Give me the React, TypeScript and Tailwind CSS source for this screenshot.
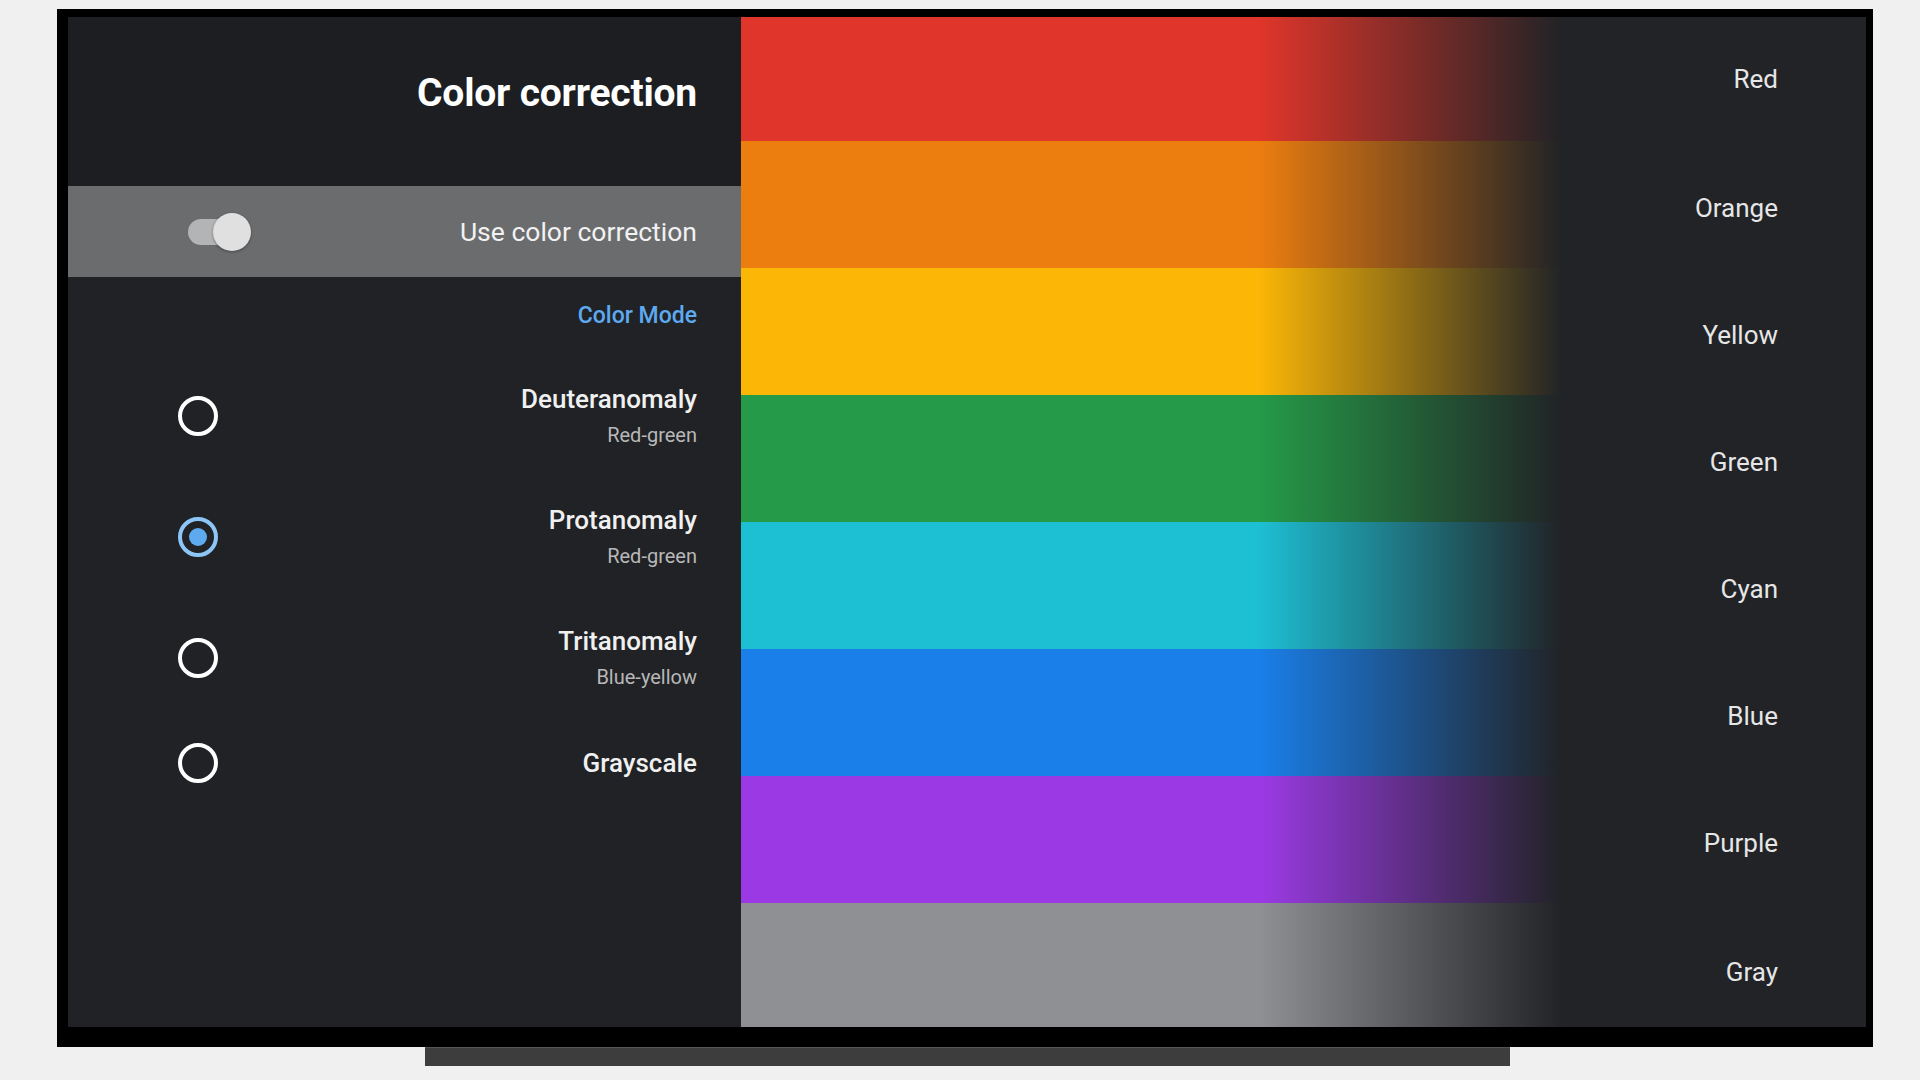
import React from 'react';

// colour bars shown on the right, each fades into the dark background
const bars = [
    { label: 'Red', h: 'h-[124px]', cls: 'bg-linear-to-r/srgb from-[#e0352a] from-46% to-[#212326] to-73%' },
    { label: 'Orange', h: 'h-[127px] pt-[8px]', cls: 'bg-linear-to-r/srgb from-[#ec7d0f] from-46% to-[#212326] to-73%' },
    { label: 'Yellow', h: 'h-[127px] pt-[8px]', cls: 'bg-linear-to-r/srgb from-[#fbb606] from-46% to-[#212326] to-73%' },
    { label: 'Green', h: 'h-[127px] pt-[8px]', cls: 'bg-linear-to-r/srgb from-[#259a48] from-46% to-[#212326] to-73%' },
    { label: 'Cyan', h: 'h-[127px] pt-[8px]', cls: 'bg-linear-to-r/srgb from-[#1dbfd3] from-46% to-[#212326] to-73%' },
    { label: 'Blue', h: 'h-[127px] pt-[8px]', cls: 'bg-linear-to-r/srgb from-[#1a7fe9] from-46% to-[#212326] to-73%' },
    { label: 'Purple', h: 'h-[127px] pt-[8px]', cls: 'bg-linear-to-r/srgb from-[#9b3ae5] from-46% to-[#212326] to-73%' },
    { label: 'Gray', h: 'flex-1 pt-[14px]', cls: 'bg-linear-to-r/srgb from-[#8e9094] from-46% to-[#212326] to-73%' },
];

const modes = [
    { title: 'Deuteranomaly', sub: 'Red-green', checked: false, mt: '' },
    { title: 'Protanomaly', sub: 'Red-green', checked: true, mt: 'mt-[57px]' },
    { title: 'Tritanomaly', sub: 'Blue-yellow', checked: false, mt: 'mt-[57px]' },
    { title: 'Grayscale', sub: '', checked: false, mt: 'mt-[53px]' },
];

const Radio = ({ checked }: { checked: boolean }) =>
    checked ? (
        <div className="w-[40px] h-[40px] rounded-full border-[4px] border-[#8cc5f6] flex items-center justify-center">
            <div className="w-[18px] h-[18px] rounded-full bg-[#5eaaf0]" />
        </div>
    ) : (
        <div className="w-[40px] h-[40px] rounded-full border-[4px] border-white" />
    );

const Toggle = () => (
    <div className="relative w-[63px] h-[38px]">
        <div className="absolute left-0 top-[6px] w-[54px] h-[26px] rounded-full bg-[#b3b4b6]" />
        <div className="absolute right-0 top-0 w-[38px] h-[38px] rounded-full bg-[#e0e0e0] shadow-[0_1px_3px_rgba(0,0,0,0.35)]" />
    </div>
);

export default function App() {
    return (
        <div className="w-[1920px] h-[1080px] bg-[#f0f0f0] pt-[9px] pl-[57px] overflow-hidden font-[Roboto,sans-serif]">
            {/* TV frame */}
            <div className="w-[1816px] h-[1038px] bg-black pt-[8px] pl-[11px] pr-[7px] pb-[20px]">
                <div className="flex h-full w-full bg-[#212326]">
                    {/* Settings panel */}
                    <div className="w-[673px] flex flex-col bg-[#202225]">
                        <div className="h-[169px] flex items-center justify-end pr-[44px] pb-[16px] bg-[#1c1e21]">
                            <h1 className="text-[39px] font-bold text-white tracking-[-0.2px]">Color correction</h1>
                        </div>
                        <div className="h-[91px] flex items-center justify-between pl-[120px] pr-[44px] bg-[#6b6c6e]">
                            <Toggle />
                            <span className="text-[26.5px] text-[#f2f2f2]">Use color correction</span>
                        </div>
                        <div className="mt-[26px] pr-[44px] text-right text-[23px] leading-[26px] font-medium text-[#5eaaf0]">
                            Color Mode
                        </div>
                        <div className="mt-[55px] flex flex-col">
                            {modes.map((m) => (
                                <div key={m.title} className={`flex items-center justify-between pl-[110px] pr-[44px] ${m.mt}`}>
                                    <Radio checked={m.checked} />
                                    <div className="flex flex-col items-end">
                                        <span className="text-[26px] leading-[30px] font-medium text-[#f0f0f0]">{m.title}</span>
                                        {m.sub && (
                                            <span className="mt-[8px] text-[20px] leading-[26px] text-[#b8b8b8]">{m.sub}</span>
                                        )}
                                    </div>
                                </div>
                            ))}
                        </div>
                    </div>

                    {/* Colour bars */}
                    <div className="flex-1 flex flex-col">
                        {bars.map((b) => (
                            <div key={b.label} className={`${b.h} flex items-center justify-end pr-[88px] ${b.cls}`}>
                                <span className="text-[26px] text-[#e6e6e6]">{b.label}</span>
                            </div>
                        ))}
                    </div>
                </div>
            </div>
            {/* stand */}
            <div className="ml-[368px] w-[1085px] h-[19px] bg-[#3d3d3d] border-t border-[#555]" />
        </div>
    );
}
